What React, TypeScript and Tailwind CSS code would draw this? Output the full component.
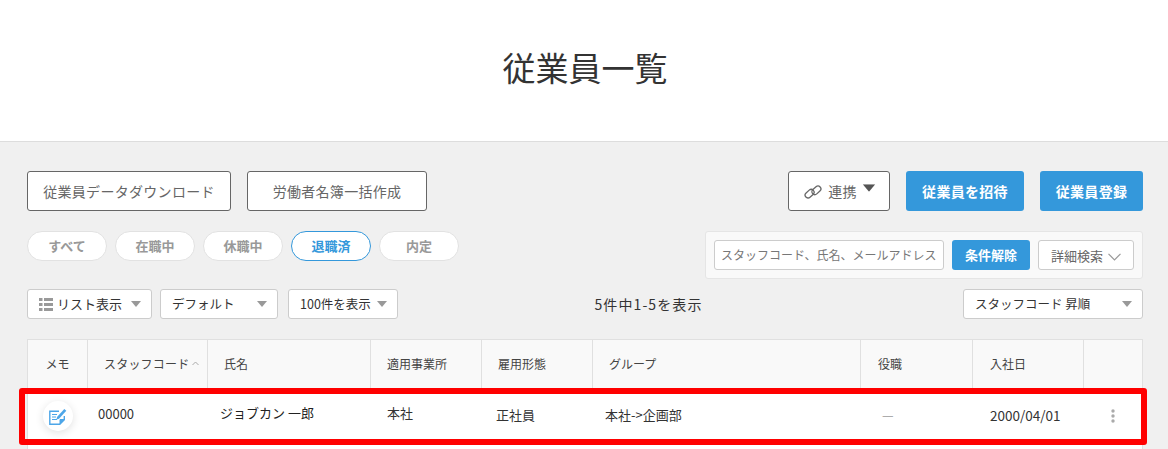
import React from "react";

const font = { fontFamily: '"Noto Sans CJK JP", "Noto Sans", sans-serif' };

function Caret({ className = "", fill = "#999" }: { className?: string; fill?: string }) {
  return (
    <svg width="10" height="6" viewBox="0 0 10 6" className={className}>
      <path d="M0 0h10L5 6z" fill={fill} />
    </svg>
  );
}

function Outline({ w, children }: { w: string; children: React.ReactNode }) {
  return (
    <div className={`${w} h-10 flex items-center justify-center bg-white border border-[#666] rounded-[3px] text-[14px] tracking-[0.3px] text-[#666]`}>
      {children}
    </div>
  );
}

function Pill({ label, active }: { label: string; active?: boolean }) {
  return (
    <div
      className={
        active
          ? "w-20 h-[30px] flex items-center justify-center rounded-full bg-white border border-[#3498db] text-[#3498db] text-[13px] font-bold"
          : "w-20 h-[30px] flex items-center justify-center rounded-full bg-white border border-[#e2e2e2] text-[#999] text-[13px] font-bold"
      }
    >
      {label}
    </div>
  );
}

function Select({ w, children, size = "text-[12.5px]" }: { w: string; children: React.ReactNode; size?: string }) {
  return (
    <div className={`${w} h-[30px] flex items-center justify-between pl-[11px] pr-[10px] bg-white border border-[#ccc] rounded-[3px] ${size} text-[#333]`}>
      {children}
      <Caret />
    </div>
  );
}

const grid = "grid grid-cols-[60px_120px_163px_111px_111px_268px_112px_111px_60px]";
const heads: [string, string][] = [
  ["メモ", "justify-center"],
  ["スタッフコード", "pl-4"],
  ["氏名", "pl-4"],
  ["適用事業所", "pl-4"],
  ["雇用形態", "pl-4"],
  ["グループ", "pl-4"],
  ["役職", "pl-[17px]"],
  ["入社日", "pl-[17px]"],
  ["", ""],
];

export default function App() {
  return (
    <div style={font} className="relative w-[1168px] h-[449px] overflow-hidden bg-[#f0f0f0]">
      <header className="h-[142px] bg-white border-b border-[#ddd] flex items-center justify-center pb-[7px] pl-[2px]">
        <h1 className="text-[33px] font-normal leading-none text-[#333]">従業員一覧</h1>
      </header>

      <main className="pl-[27px] pr-[25px] pt-[29px]">
        <div className="flex justify-between">
          <div className="flex gap-4">
            <Outline w="w-[204px]">従業員データダウンロード</Outline>
            <Outline w="w-[180px]">労働者名簿一括作成</Outline>
          </div>
          <div className="flex gap-4">
            <Outline w="w-[102px]">
              <svg width="18" height="14" viewBox="0 0 18 14" fill="none" stroke="#666" strokeWidth="1.3" className="mr-[6px] mt-px">
                <rect x="0.6" y="5.8" width="10" height="5.8" rx="2.9" transform="rotate(-42 5.6 8.7)" />
                <rect x="7.4" y="2.4" width="10" height="5.8" rx="2.9" transform="rotate(-42 12.4 5.3)" />
              </svg>
              <span>連携</span>
              <Caret fill="#555" className="ml-[7px] mb-[7px] scale-125" />
            </Outline>
            <div className="w-[118px] h-10 flex items-center justify-center rounded-[3px] bg-[#3498db] text-white text-[14px] tracking-[0.3px] font-bold">従業員を招待</div>
            <div className="w-[103px] h-10 flex items-center justify-center rounded-[3px] bg-[#3498db] text-white text-[14px] tracking-[0.3px] font-bold">従業員登録</div>
          </div>
        </div>

        <div className="flex justify-between mt-5">
          <div className="flex gap-2 items-start">
            <Pill label="すべて" />
            <Pill label="在職中" />
            <Pill label="休職中" />
            <Pill label="退職済" active />
            <Pill label="内定" />
          </div>
          <div className="w-[438px] h-12 flex items-center pl-2 gap-2 bg-[#f9f9f9] border border-[#e5e5e5] rounded-[3px]">
            <div className="w-[230px] h-[30px] flex items-center pl-[6px] bg-white border border-[#ccc] rounded-[3px] text-[12px] text-[#777] whitespace-nowrap overflow-hidden">
              スタッフコード、氏名、メールアドレス
            </div>
            <div className="w-[78px] h-[30px] flex items-center justify-center rounded-[3px] bg-[#3498db] text-white text-[13px] font-bold">条件解除</div>
            <div className="w-[96px] h-[30px] flex items-center justify-center gap-[5px] bg-white border border-[#ccc] rounded-[3px] text-[13px] text-[#666]">
              <span className="pt-[1px]">詳細検索</span>
              <svg width="13" height="8" viewBox="0 0 13 8" fill="none" stroke="#999" strokeWidth="1.2" className="mt-[3px]"><path d="M.5.8 6.500 6.800 12.500.8" /></svg>
            </div>
          </div>
        </div>

        <div className="flex justify-between mt-[10px]">
          <div className="flex">
            <Select w="w-[125px]" size="text-[13px]">
              <span className="flex items-center gap-[5px]">
                <svg width="14" height="13" viewBox="0 0 14 13" fill="#999">
                  <path d="M0 0h3.500v3H0zM5 0h9v3H5zM0 5h3.500v3H0zM5 5h9v3H5zM0 10h3.500v3H0zM5 10h9v3H5z" />
                </svg>
                <span className="-ml-[1px]">リスト表示</span>
              </span>
            </Select>
            <div className="w-2" />
            <Select w="w-[118px]">デフォルト</Select>
            <div className="w-[10px]" />
            <Select w="w-[110px]">100件を表示</Select>
          </div>
          <div className="flex-1 flex items-center justify-center pr-[64px] text-[14px] tracking-[1.1px] text-[#333]">5件中1-5を表示</div>
          <Select w="w-[180px]">スタッフコード 昇順</Select>
        </div>

        <div className="mt-5 w-[1116px] border-x border-[#e0e0e0]">
          <div className={`${grid} h-[50px] bg-[#f9f9f9] border-t border-[#e0e0e0]`}>
            {heads.map(([label, cls], i) => (
              <div key={i} className={`flex items-center pb-[2px] ${cls} text-[12px] text-[#444] ${i === 1 ? "tracking-[0.2px]" : ""} ${i < 8 ? "border-r border-[#e0e0e0]" : ""}`}>
                {label}
                {i === 1 && (
                  <svg width="7" height="5" viewBox="0 0 7 5" fill="none" stroke="#aaa" className="ml-[3px]"><path d="M.5 4 3.500 1l3 3" /></svg>
                )}
              </div>
            ))}
          </div>
          <div className={`${grid} h-[60px] bg-white text-[13px] text-[#333] border-t border-[#e0e0e0]`}>
            <div className="flex items-center justify-center pb-[8px]">
              <div className="w-[30px] h-[30px] rounded-full bg-white shadow-[0_2px_8px_rgba(0,0,0,0.12)] flex items-center justify-center">
                <svg width="18" height="17" viewBox="0 0 18 17" fill="none" stroke="#4da6e8" strokeWidth="1.4" className="mt-[1px]">
                  <path d="M10 3.200H.8v13h10l4.500-4.500V8" />
                  <path d="M3 6.500h5M3 9h4M3 11.500h5" strokeWidth="1.1" />
                  <path d="M8 9 15.300 1l2 1.800-7.300 8-2.500.7z" fill="#4da6e8" stroke="none" />
                  <path d="M11 16v-4.500h4.500" fill="#4da6e8" strokeWidth="1" />
                </svg>
              </div>
            </div>
            <div className="flex items-center pl-[10px] pb-[12px]">00000</div>
            <div className="flex items-center pl-[12px] pb-[13px] text-[#222]">ジョブカン 一郎</div>
            <div className="flex items-center pl-4 pb-[13px]">本社</div>
            <div className="flex items-center pl-[14px] pb-[9px]">正社員</div>
            <div className="flex items-center pl-[12px] pb-[9px]">本社-&gt;企画部</div>
            <div className="flex items-center pl-[21px] pb-[9px] text-[#999]">—</div>
            <div className="flex items-center pl-[17px] pb-[9px] text-[13.5px]">2000/04/01</div>
            <div className="flex items-center justify-center pb-[8px] pr-[2px]">
              <svg width="4" height="14" viewBox="0 0 4 14" fill="#aaa">
                <circle cx="2" cy="2" r="1.700" />
                <circle cx="2" cy="7" r="1.700" />
                <circle cx="2" cy="12" r="1.700" />
              </svg>
            </div>
          </div>
        </div>
      </main>

      <div className="absolute left-[19px] top-[388px] w-[1128px] h-[57px] border-[6px] border-[#ff0000] rounded-[3px]" />
    </div>
  );
}
